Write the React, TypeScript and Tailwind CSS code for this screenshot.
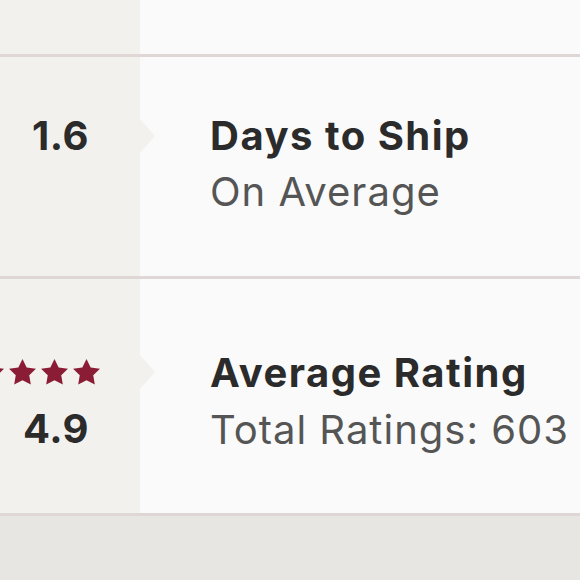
const Star = () => (
  <svg width="27" height="26" viewBox="2 2 20 19.3" className="shrink-0">
    <path
      d="M12 2l3.09 6.26L22 9.27l-5 4.87 1.18 6.88L12 17.77l-6.18 3.25L7 14.14 2 9.27l6.91-1.01L12 2z"
      fill="#8a1d35"
    />
  </svg>
);

const Arrow = () => (
  <span className="absolute right-[-15px] top-1/2 -translate-y-1/2 h-0 w-0 border-y-[17px] border-l-[15px] border-y-transparent border-l-[#f3f1ee]" />
);

const Divider = () => <div className="h-[3px] w-full bg-[#ded7d6]" />;

export default function App() {
  return (
    <div className="flex h-[580px] w-[580px] flex-col overflow-hidden bg-[#e8e6e2] font-['Inter',sans-serif]">
      <div className="flex h-[54px]">
        <div className="w-[140px] bg-[#f3f1ee]" />
        <div className="flex-1 bg-[#fafafa]" />
      </div>
      <Divider />

      {/* days to ship */}
      <div className="flex h-[219px]">
        <div className="relative z-10 flex w-[140px] flex-col bg-[#f3f1ee] pt-[51px]">
          <div className="relative flex h-[56px] items-center justify-end pr-[51px] text-[40px] font-bold tracking-[0.5px] text-[#2b2b2b]">
            1.6
            <Arrow />
          </div>
        </div>
        <div className="flex flex-1 flex-col bg-[#fafafa] pl-[70px] pt-[51px] leading-[56px] text-[40px]">
          <p className="font-bold tracking-[1.5px] text-[#2b2b2b]">Days to Ship</p>
          <p className="tracking-[1px] text-[#555555]">On Average</p>
        </div>
      </div>
      <Divider />

      {/* rating */}
      <div className="flex h-[234px]">
        <div className="relative z-10 flex w-[140px] flex-col bg-[#f3f1ee] pt-[65px]">
          <div className="relative flex h-[56px] items-center justify-end gap-[5px] pr-[40px]">
            <Star />
            <Star />
            <Star />
            <Star />
            <Star />
            <Arrow />
          </div>
          <div className="flex h-[58px] items-center justify-end pr-[51px] text-[40px] font-bold tracking-[0.5px] text-[#2b2b2b]">
            4.9
          </div>
        </div>
        <div className="flex flex-1 flex-col bg-[#fafafa] pl-[70px] pt-[65px] leading-[57px] text-[40px]">
          <p className="font-bold tracking-[1.5px] text-[#2b2b2b]">Average Rating</p>
          <p className="tracking-[1px] text-[#555555]">Total Ratings: 603</p>
        </div>
      </div>
      <Divider />
    </div>
  );
}
